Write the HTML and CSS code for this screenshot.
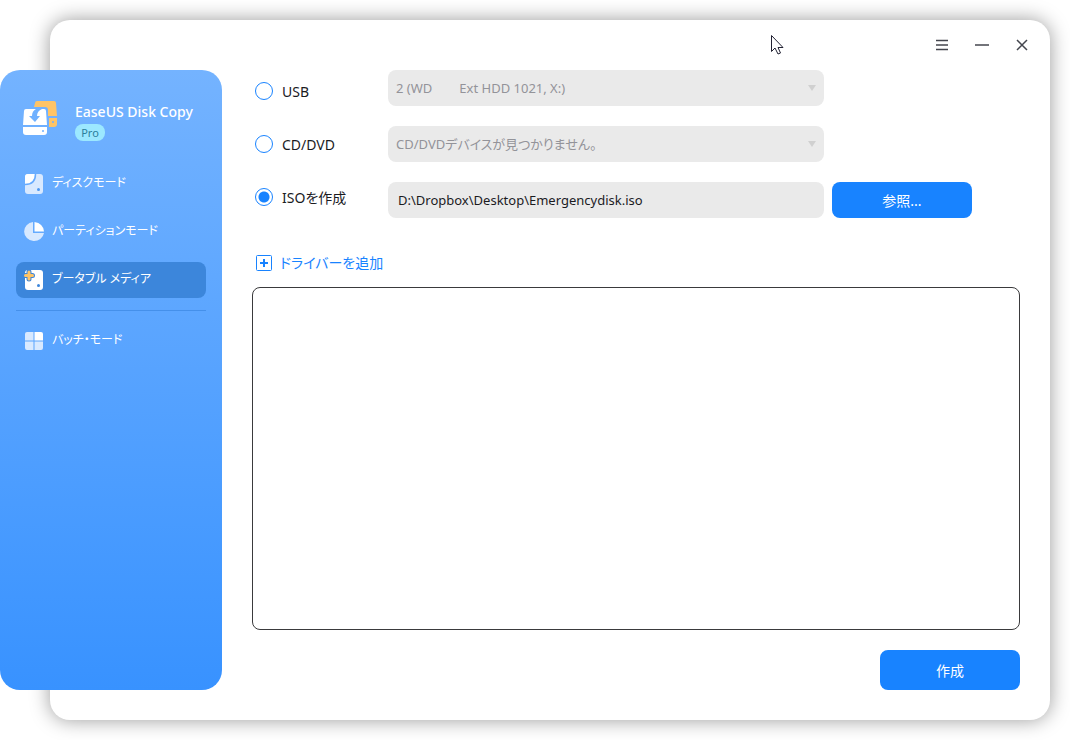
FILE: index.html
```html
<!DOCTYPE html>
<html lang="ja">
<head>
  <meta charset="UTF-8" />
  <meta name="viewport" content="width=device-width, initial-scale=1.0"/>
  <title>EaseUS Disk Copy Pro</title>
  <link rel="stylesheet" href="styles.css">
</head>
<body>
  <div class="window">
    <aside class="sidebar">
      <div class="brand">
        <svg class="logo" width="36" height="36" viewBox="0 0 36 36">
          <path d="M14 1h17q2 0 2 2l1 13H25V10q0-3-3-3H11l1-4q0-2 2-2z" fill="#ffc466"/>
          <path d="M26 18h8v6q0 3-3 3h-5z" fill="#ffc466"/>
          <circle cx="30" cy="22" r="1" fill="#6fb0ff"/>
          <path d="M3 9h10q-4 2-4 7H6l6 6 5-6h-3q0-5 5-7h2q2 0 2 2l1 14H0L1 11q0-2 2-2z" fill="#fff"/>
          <path d="M0 27h24v5q0 3-3 3H3q-3 0-3-3z" fill="#fff"/>
          <circle cx="20" cy="31" r="1" fill="#6fb0ff"/>
        </svg>
        <div class="brand-text">
          <h1>EaseUS Disk Copy</h1>
          <span class="badge">Pro</span>
        </div>
      </div>

      <nav class="nav">
        <a href="#disk">
          <svg width="20" height="20" viewBox="0 0 20 20">
            <rect x="1" y="0" width="18" height="20" rx="3" fill="#d8e9ff"/>
            <path d="M4 0h7q0 10-10 10V3q0-3 3-3z" fill="#fff"/>
            <path d="M11.500 0q0 10.500-10.500 10.500" fill="none" stroke="#66abff" stroke-width="1.500"/>
            <circle cx="14.500" cy="15.500" r="1.500" fill="#4d98f2"/>
          </svg>
          <span>ディスクモード</span>
        </a>
        <a href="#partition">
          <svg width="20" height="20" viewBox="0 0 20 20">
            <path d="M9 0v11h11A10 9.500 0 1 1 9 0z" fill="#d8e9ff"/>
            <path d="M10.500 0q8.500 1 9.500 9.500h-9.500z" fill="#fff"/>
          </svg>
          <span>パーティションモード</span>
        </a>
        <a href="#bootable" class="active">
          <svg width="20" height="20" viewBox="0 0 20 20">
            <rect x="1" y="0" width="18" height="20" rx="3" fill="#fff"/>
            <circle cx="14.500" cy="15.500" r="1.500" fill="#3c86db"/>
            <path d="M5 2v7M1.500 5.500h7" stroke="#3c86db" stroke-width="5" stroke-linecap="round"/>
            <path d="M5 2v7M1.500 5.500h7" stroke="#ffc466" stroke-width="3" stroke-linecap="round"/>
          </svg>
          <span>ブータブル メディア</span>
        </a>
        <hr>
        <a href="#batch">
          <svg width="20" height="20" viewBox="0 0 20 20">
            <path d="M3 1h6.500v8.500H1V3q0-2 2-2zM1 10.500h8.500V19H3q-2 0-2-2zM10.500 10.500H19V17q0 2-2 2h-6.500z" fill="#d8e9ff"/>
            <path d="M10.500 1H17q2 0 2 2v6.500h-8.500z" fill="#fff"/>
          </svg>
          <span>バッチ・モード</span>
        </a>
      </nav>
    </aside>

    <main class="main">
      <header class="titlebar">
        <button type="button" aria-label="メニュー">
          <svg width="14" height="14" viewBox="0 0 14 14"><path d="M1 2.500h12M1 7h12M1 11.500h12"/></svg>
        </button>
        <button type="button" aria-label="最小化">
          <svg width="14" height="14" viewBox="0 0 14 14"><path d="M0 7h14"/></svg>
        </button>
        <button type="button" aria-label="閉じる">
          <svg width="14" height="14" viewBox="0 0 14 14"><path d="M2 2l10 10M12 2L2 12"/></svg>
        </button>
      </header>

      <form class="content">
        <div class="targets">
          <div class="radios">
            <label><input type="radio" name="target" value="usb">USB</label>
            <label><input type="radio" name="target" value="cd">CD/DVD</label>
            <label><input type="radio" name="target" value="iso" checked>ISOを作成</label>
          </div>

          <div class="fields">
            <div class="select-wrap">
              <select aria-label="USB" disabled>
                <option>2 (WD&nbsp;&nbsp;&nbsp;&nbsp;&nbsp;&nbsp;&nbsp;&nbsp;Ext HDD 1021, X:)</option>
              </select>
            </div>
            <div class="select-wrap">
              <select aria-label="CD/DVD" disabled>
                <option>CD/DVDデバイスが見つかりません。</option>
              </select>
            </div>
            <input type="text" class="path" aria-label="ISOの保存先" value="D:\Dropbox\Desktop\Emergencydisk.iso">
          </div>

          <button type="button" class="btn browse">参照...</button>
        </div>

        <button type="button" class="add-driver">
          <svg width="16" height="16" viewBox="0 0 16 16">
            <rect x="0.500" y="0.500" width="15" height="15" rx="1"/>
            <path d="M8 4v8M4 8h8" stroke-width="2"/>
          </svg>
          ドライバーを追加
        </button>

        <div class="driver-list"></div>

        <button type="button" class="btn create">作成</button>
      </form>
    </main>

    <svg class="cursor" width="13" height="20" viewBox="0 0 13 20">
      <path d="M.5.500v16l3.500-3.500 3 6 2.500-1-2.500-5.500h5z" fill="#fff" stroke="#223"/>
    </svg>
  </div>
</body>
</html>
```
FILE: styles.css
```css
:root {
  --blue: #1883ff;
  --field-bg: #eaeaea;
  --text: #1b1b1f;
}

* {
  box-sizing: border-box;
}

body {
  margin: 0;
  display: flex;
  min-height: 100vh;
  padding: 20px 20px 20px 50px;
  background: #fff;
  color: var(--text);
  font-family: "Noto Sans", "Noto Sans CJK JP", sans-serif;
  font-size: 14px;
  font-feature-settings: "palt";
}

button,
input,
select {
  font: inherit;
  font-feature-settings: inherit;
  color: inherit;
}

button {
  border: none;
  cursor: pointer;
}

.window {
  flex: 1;
  display: flex;
  position: relative;
  background: #fff;
  border-radius: 20px;
  box-shadow: 0 0 20px rgba(0, 0, 0, 0.4);
}

/* Sidebar */
.sidebar {
  flex: none;
  width: 222px;
  margin: 50px 0 30px -50px;
  padding: 30px 16px;
  border-radius: 20px;
  background: linear-gradient(#74b3ff, #3892ff);
  color: #fff;
}

.brand {
  display: flex;
  gap: 16px;
  padding-left: 7px;
  height: 66px;
}

.brand h1 {
  margin: 2px 0;
  font-size: 14px;
  line-height: 20px;
  font-weight: 500;
  white-space: nowrap;
}

.badge {
  display: block;
  width: 30px;
  border-radius: 8px;
  background: #9ce8ff;
  color: #2b7f9c;
  font-size: 11px;
  line-height: 17px;
  text-align: center;
}

.nav {
  display: flex;
  flex-direction: column;
  gap: 12px;
}

.nav a {
  display: flex;
  align-items: center;
  gap: 8px;
  height: 36px;
  padding: 0 8px;
  border-radius: 8px;
  color: #fff;
  font-size: 12px;
  text-decoration: none;
  white-space: nowrap;
}

.nav span {
  padding-bottom: 4px;
}

.nav a.active {
  background: #3c86db;
}

.nav hr {
  width: 100%;
  margin: 0;
  border: none;
  border-top: 1px solid #4590ea;
}

/* Main area */
.main {
  flex: 1;
  min-width: 0;
  display: flex;
  flex-direction: column;
}

.titlebar {
  display: flex;
  justify-content: flex-end;
  height: 50px;
  padding-right: 8px;
}

.titlebar button {
  display: flex;
  align-items: center;
  justify-content: center;
  width: 40px;
  padding: 0;
  background: none;
}

.titlebar svg {
  fill: none;
  stroke: #44464e;
  stroke-width: 1.5;
}

.content {
  flex: 1;
  display: flex;
  flex-direction: column;
  padding: 0 30px 30px;
}

.targets {
  display: grid;
  grid-template-columns: 128px minmax(0, 436px) 140px;
  gap: 8px;
}

.radios {
  display: flex;
  flex-direction: column;
  gap: 17px;
  padding: 3px 0 0 3px;
}

.radios label {
  display: flex;
  align-items: center;
  gap: 9px;
  height: 36px;
}

.radios input {
  appearance: none;
  width: 18px;
  height: 18px;
  margin: 0;
  border: 1px solid var(--blue);
  border-radius: 50%;
}

.radios input:checked {
  background: radial-gradient(circle, var(--blue) 5px, #fff 6px);
}

.fields {
  display: flex;
  flex-direction: column;
  gap: 20px;
}

.select-wrap {
  position: relative;
}

.select-wrap::after {
  content: "";
  position: absolute;
  top: 15px;
  right: 8px;
  border: 4px solid transparent;
  border-top: 6px solid #d0d0d0;
  border-bottom: none;
}

.fields select,
.path {
  display: block;
  appearance: none;
  width: 100%;
  height: 36px;
  padding: 0 8px;
  border: none;
  border-radius: 8px;
  background: var(--field-bg);
  font-size: 13px;
}

.fields select {
  color: #939399;
  opacity: 1;
}

.path {
  padding: 0 10px;
}

.btn {
  border-radius: 8px;
  background: var(--blue);
  color: #fff;
}

.browse {
  align-self: end;
  height: 36px;
}

.add-driver {
  align-self: flex-start;
  display: flex;
  align-items: center;
  gap: 8px;
  margin: 35px 0 14px;
  padding: 0 4px;
  background: none;
  color: var(--blue);
  line-height: 20px;
}

.add-driver svg {
  fill: none;
  stroke: var(--blue);
}

.driver-list {
  flex: 1;
  min-height: 120px;
  border: 1px solid #3a3a3c;
  border-radius: 8px;
}

.create {
  align-self: flex-end;
  width: 140px;
  height: 40px;
  margin-top: 20px;
}

/* Mouse pointer over the title bar */
.cursor {
  position: absolute;
  top: 15px;
  left: 721px;
}
```
